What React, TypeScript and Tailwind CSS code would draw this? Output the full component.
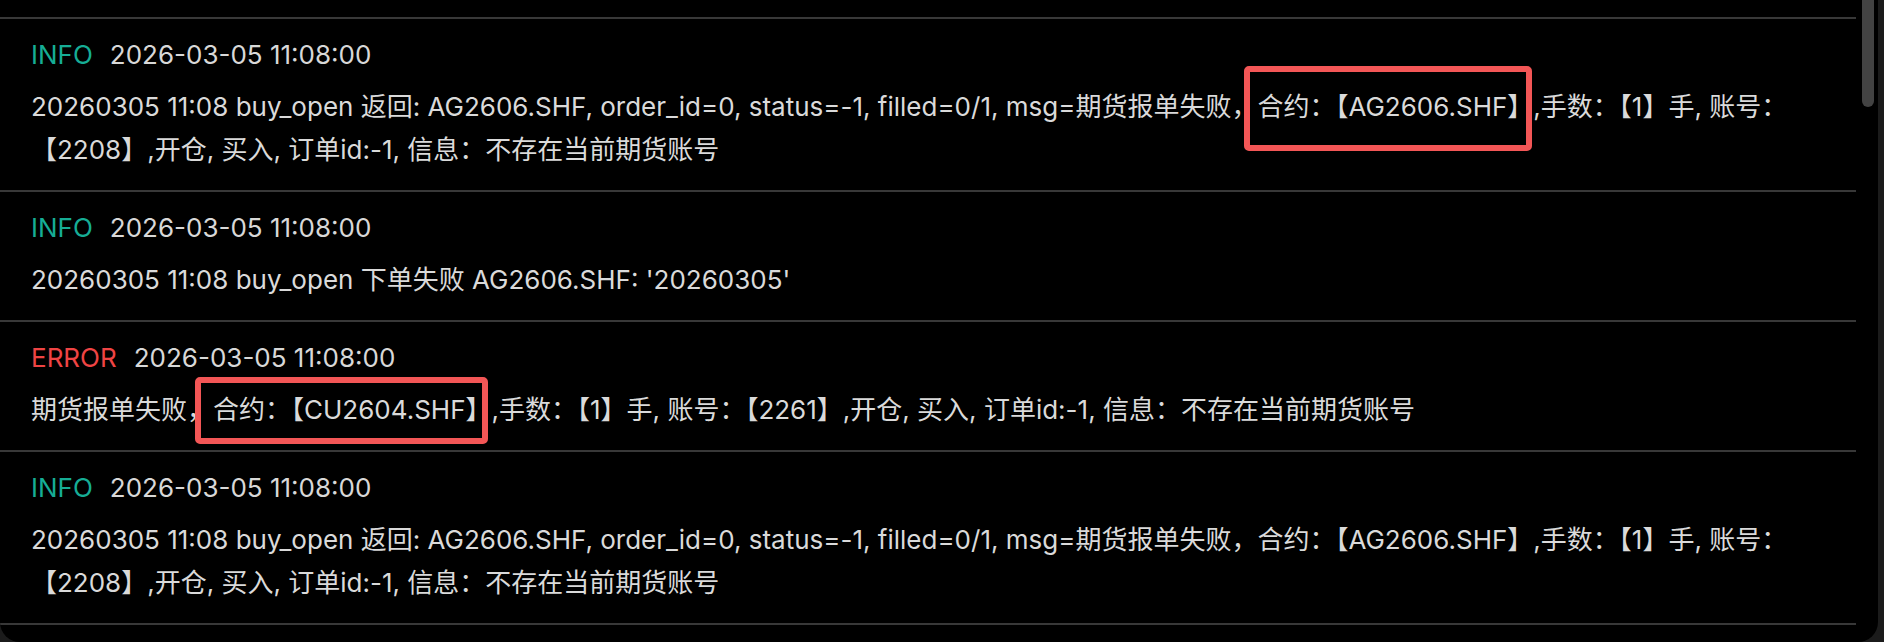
import React from "react";

type Part = string | { box: string; pos: string };

type Entry = {
  level: "INFO" | "ERROR";
  time: string;
  parts: Part[];
};

const entries: Entry[] = [
  {
    level: "INFO",
    time: "2026-03-05 11:08:00",
    parts: [
      "20260305 11:08 buy_open 返回: AG2606.SHF, order_id=0, status=-1, filled=0/1, msg=期货报单失败，",
      { box: "合约：【AG2606.SHF】", pos: "-left-[13px] right-[1px] -top-[25px] -bottom-[29px]" },
      ",手数：【1】手, 账号：【2208】,开仓, 买入, 订单id:-1, 信息：不存在当前期货账号",
    ],
  },
  {
    level: "INFO",
    time: "2026-03-05 11:08:00",
    parts: ["20260305 11:08 buy_open 下单失败 AG2606.SHF: '20260305'"],
  },
  {
    level: "ERROR",
    time: "2026-03-05 11:08:00",
    parts: [
      "期货报单失败，",
      { box: "合约：【CU2604.SHF】", pos: "-left-[18px] right-[4px] -top-[17px] -bottom-[19px]" },
      ",手数：【1】手, 账号：【2261】,开仓, 买入, 订单id:-1, 信息：不存在当前期货账号",
    ],
  },
  {
    level: "INFO",
    time: "2026-03-05 11:08:00",
    parts: [
      "20260305 11:08 buy_open 返回: AG2606.SHF, order_id=0, status=-1, filled=0/1, msg=期货报单失败，合约：【AG2606.SHF】,手数：【1】手, 账号：【2208】,开仓, 买入, 订单id:-1, 信息：不存在当前期货账号",
    ],
  },
];

function LogRow({ entry }: { entry: Entry }) {
  return (
    <div className="border-b-2 border-[#383838] px-[31px] pt-[18px] pb-[19px]">
      <div className="flex items-baseline leading-[36px]">
        <span className={entry.level === "ERROR" ? "text-[#ef4444]" : "text-[#16ad95]"}>
          {entry.level}
        </span>
        <span className="ml-[17px] text-[#d8d8d8]">{entry.time}</span>
      </div>
      <p className="mt-[12px] leading-[43px] text-[#dadada]">
        {entry.parts.map((p, i) =>
          typeof p === "string" ? (
            <React.Fragment key={i}>{p}</React.Fragment>
          ) : (
            <span key={i} className="relative">
              {p.box}
              {/* annotation box drawn over the text */}
              <span
                className={`pointer-events-none absolute rounded-[5px] border-[6px] border-[#f35656] ${p.pos}`}
              />
            </span>
          )
        )}
      </p>
    </div>
  );
}

export default function App() {
  return (
    <div
      className="h-[642px] w-[1884px] overflow-hidden bg-[#1b1b1b] text-[26px]"
      style={{ fontFamily: 'Inter, "Noto Sans CJK SC", sans-serif' }}
    >
      <div className="relative h-[642px] w-[1878px] overflow-hidden rounded-b-[20px] bg-black">
        <div className="w-[1856px]">
          <div className="h-[19px] border-b-2 border-[#383838]" />
          {entries.map((e, i) => (
            <LogRow key={i} entry={e} />
          ))}
        </div>
        {/* scrollbar thumb */}
        <div className="absolute right-[4px] top-[-10px] h-[117px] w-[12px] rounded-full bg-[#434343]" />
      </div>
    </div>
  );
}
